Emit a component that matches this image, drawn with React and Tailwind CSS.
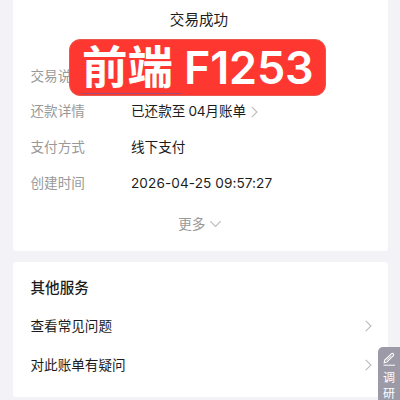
import React from 'react';

const details = [
  { label: '交易说明', value: '' },
  { label: '还款详情', value: '已还款至', month: '04', rest: '月账单' },
  { label: '支付方式', value: '线下支付' },
  { label: '创建时间', value: '2026-04-25 09:57:27', numeric: true },
];

const services = ['查看常见问题', '对此账单有疑问'];

function Chevron({ className }) {
  return (
    <svg className={className} viewBox="0 0 7 12" fill="none" stroke="currentColor">
      <path d="M0.7 0.8 6 6 0.7 11.2" strokeWidth="1.1" />
    </svg>
  );
}

function DetailRow({ label, value, month, rest, numeric }) {
  return (
    <div className="flex h-[35.7px] items-center">
      <span className="w-[100.5px] shrink-0 text-[#999]">{label}</span>
      <span className={numeric ? 'tracking-[0.08px]' : ''}>{value}</span>
      {month && (
        <>
          <span className="ml-[3px] tracking-[-0.2px]">{month}</span>
          <span>{rest}</span>
          <Chevron className="ml-[5px] h-3 w-[7px] text-[#bbb]" />
        </>
      )}
    </div>
  );
}

function Badge() {
  return (
    <div className="absolute left-[69px] top-[39px] h-[57px] w-[257px] rounded-[11px] border border-[#e8584f] bg-[#fe3830] text-white">
      <div className="flex h-full items-center pl-[12px] leading-none">
        <span className="pt-px text-[45.5px] font-bold">前端</span>
        <span className="ml-[11px] text-[45px] font-semibold tracking-[-0.2px]">F1253</span>
      </div>
      <div className="absolute bottom-px left-[12px] h-px w-[99px] bg-[#a04a78]" />
    </div>
  );
}

function SurveyTab() {
  return (
    <div className="absolute left-[378px] top-[347px] flex h-[60px] w-[30px] flex-col items-start rounded-l-[5px] bg-[#9b9aa6] pl-[5px] pt-[5px] text-white">
      <svg className="h-[14px] w-[12px]" viewBox="0 0 12 14" fill="none" stroke="currentColor">
        <path d="M1.2 10.7 1.7 8 8.6 1.6Q9.4 1 10.1 1.7L10.5 2.2Q11 3 10.3 3.7L3.8 10.1Z" strokeWidth="1.1" />
        <path d="M3.5 8.3 8.3 3.8" strokeWidth="0.7" />
        <path d="M0.5 13.2H12" strokeWidth="1" />
      </svg>
      <span className="mt-[4px] w-3 text-[12px] leading-[15.5px]">调研</span>
    </div>
  );
}

export default function App() {
  return (
    <div className="relative h-[400px] w-[400px] overflow-hidden bg-[#f2f2f7] pl-[13px] pr-[12.5px] font-[Inter,'Noto_Sans_CJK_SC',sans-serif] text-[13.6px] text-[#1c1c1c]">
      <div className="h-[251px] rounded-b-[3px] bg-white px-[17.5px] pt-[9px]">
        <div className="pr-[2.5px] text-center text-[14.6px] leading-[22px]">交易成功</div>
        <div className="mt-[27px]">
          {details.map((row) => (
            <DetailRow key={row.label} {...row} />
          ))}
        </div>
        <div className="mt-[12px] flex items-center justify-center pr-[3px] text-[#999]">
          <span className="leading-[22px]">更多</span>
          <Chevron className="ml-[7px] h-3 w-[7px] rotate-90 text-[#bbb]" />
        </div>
      </div>
      <div className="mt-[11px] h-[135px] rounded-[3px] bg-white pl-[17.5px] pr-[16px] pt-[15px]">
        <div className="text-[14.6px] font-medium leading-[22px]">其他服务</div>
        <div className="mt-[8px]">
          {services.map((name) => (
            <div key={name} className="flex h-[38.5px] items-center justify-between">
              <span>{name}</span>
              <Chevron className="h-3 w-[7px] text-[#bbb]" />
            </div>
          ))}
        </div>
      </div>
      <Badge />
      <SurveyTab />
    </div>
  );
}
